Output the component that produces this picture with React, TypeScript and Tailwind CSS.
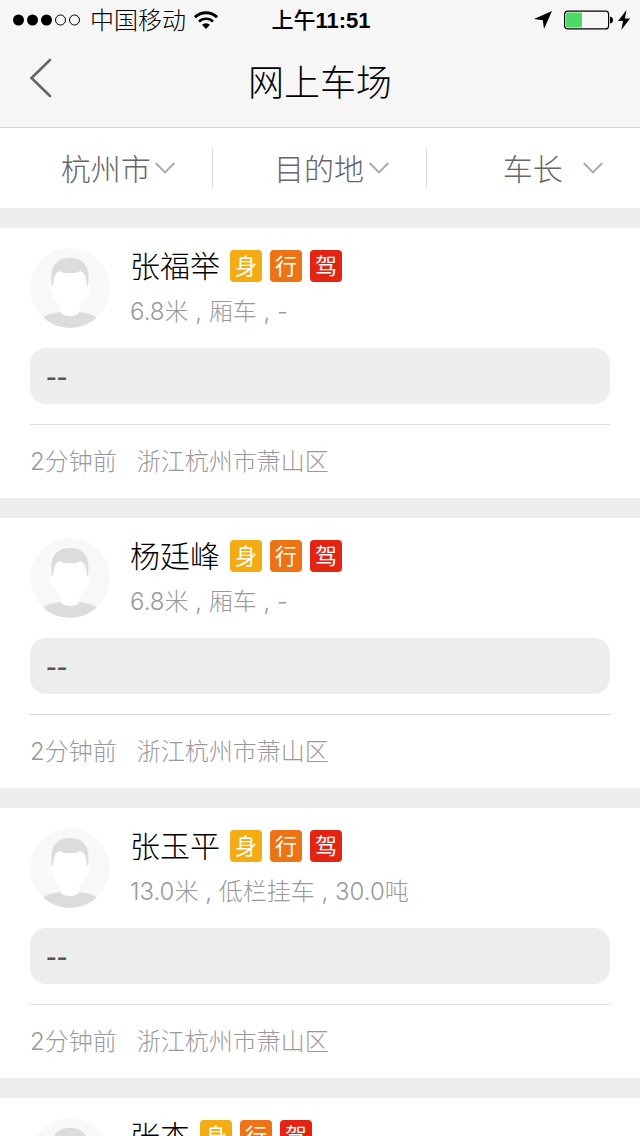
import React from 'react';

interface Driver {
  name: string;
  truck: string;
  route: string;
  time: string;
  place: string;
}

const drivers: Driver[] = [
  { name: '张福举', truck: '6.8米 , 厢车 , -', route: '--', time: '2分钟前', place: '浙江杭州市萧山区' },
  { name: '杨廷峰', truck: '6.8米 , 厢车 , -', route: '--', time: '2分钟前', place: '浙江杭州市萧山区' },
  { name: '张玉平', truck: '13.0米 , 低栏挂车 , 30.0吨', route: '--', time: '2分钟前', place: '浙江杭州市萧山区' },
  { name: '张杰', truck: '6.8米 , 厢车 , -', route: '--', time: '2分钟前', place: '浙江杭州市萧山区' },
];

const badges = [
  { text: '身', color: 'bg-[#f3ac14]' },
  { text: '行', color: 'bg-[#ec7416]' },
  { text: '驾', color: 'bg-[#e42412]' },
];

const filters = [
  { id: 'city', label: '出发地', value: '杭州市' },
  { id: 'dest', label: '目的地', value: '目的地' },
  { id: 'length', label: '车长', value: '车长' },
];

const StatusBar: React.FC = () => {
  return (
    <div className="h-10 pl-3 pr-[10px] grid grid-cols-[1fr_auto_1fr] items-center text-2xl text-black">
      <div className="flex items-center">
        <svg className="w-[70px] h-3" viewBox="0 0 70 12">
          <circle cx="6.5" cy="6" r="5.5" />
          <circle cx="20.5" cy="6" r="5.5" />
          <circle cx="34.5" cy="6" r="5.5" />
          <circle cx="48.5" cy="6" r="5" fill="none" stroke="#000" />
          <circle cx="62.5" cy="6" r="5" fill="none" stroke="#000" />
        </svg>
        <span className="ml-2 pt-0.5">中国移动</span>
        <svg className="w-6 h-[18px] ml-2" viewBox="0 0 24 18" fill="none" stroke="#000">
          <path d="M1 6.2a16 16 0 0 1 22 0" strokeWidth="3" />
          <path d="M5 10.6a10.2 10.2 0 0 1 14 0" strokeWidth="2.6" />
          <path d="M12 18l-4-4.2a5.8 5.8 0 0 1 8 0z" fill="#000" stroke="none" />
        </svg>
      </div>
      <div className="pt-0.5 text-[22px] font-medium">上午<span className="font-bold">11:51</span></div>
      <div className="flex items-center justify-end">
        <svg className="w-[18px] h-[18px]" viewBox="0 0 18 18">
          <path d="M18 0L10 18L8.8 9.2L0 8z" />
        </svg>
        <svg className="w-[50px] h-5 ml-3" viewBox="0 0 50 20">
          <rect x="0.6" y="1.1" width="44" height="17.8" rx="3" fill="none" stroke="#000" strokeWidth="1.2" />
          <rect x="2" y="2.5" width="16" height="15" rx="1" fill="#4cd964" />
          <path d="M46 6.5q3 .5 3 3.5t-3 3.5z" />
        </svg>
        <svg className="w-3 h-5 ml-1" viewBox="0 0 12 20">
          <path d="M8.5 0L0 11h5L3.4 20L12 8.6H6.8z" />
        </svg>
      </div>
    </div>
  );
};

const Avatar: React.FC = () => {
  return (
    <svg className="w-20 h-20 shrink-0 rounded-full" viewBox="0 0 80 80">
      <circle cx="40" cy="40" r="40" fill="#f8f8f8" />
      {/* Shoulders */}
      <path d="M13 70C18 65 26 65 31 64L49 64C54 65 62 65 67 70A40 40 0 0 1 13 70z" fill="#dcdcdc" />
      {/* Face and neck */}
      <path d="M22 22H58V37C62 38 60 46 57 47C55 53 51 56 49 59V65C46 69 34 69 31 65V59C29 56 25 53 23 47C20 46 18 38 22 37z" fill="#fff" />
      {/* Hair */}
      <path d="M22 38C19 18 27 10 40 10S61 18 58 38H57L56 31C55 26 53 24 50 23C46 26 43 25 40 25S34 26 30 23C27 24 25 26 24 31L23 38z" fill="#dcdcdc" />
    </svg>
  );
};

const DriverCard: React.FC<{ driver: Driver }> = ({ driver }) => {
  return (
    <li className="bg-white px-[30px] pt-5">
      <div className="flex gap-5">
        <Avatar />
        <div>
          <div className="flex items-center h-9">
            <h2 className="pt-0.5 text-[30px] leading-9 text-black mr-[10px]">{driver.name}</h2>
            <div className="flex gap-2">
              {badges.map((badge) => (
                <span
                  key={badge.text}
                  className={`w-8 h-8 pt-0.5 rounded flex items-center justify-center text-[22px] leading-8 font-normal text-white ${badge.color}`}
                >
                  {badge.text}
                </span>
              ))}
            </div>
          </div>
          <p className="mt-3 text-2xl text-[#999] font-['Inter','Noto_Sans_CJK_SC',sans-serif]">{driver.truck}</p>
        </div>
      </div>
      <p className="mt-5 h-14 px-4 rounded-2xl bg-[#eeedee] text-[32px] leading-14 text-[#555]">{driver.route}</p>
      <div className="mt-5 h-[74px] border-t border-[#dcdcdc] flex items-center gap-5 text-2xl text-[#999] font-['Inter','Noto_Sans_CJK_SC',sans-serif]">
        <span>{driver.time}</span>
        <span>{driver.place}</span>
      </div>
    </li>
  );
};

const App: React.FC = () => {
  return (
    <div
      lang="zh-CN"
      className="h-screen flex flex-col overflow-hidden bg-[#eeedee] font-light font-['Liberation_Sans','Noto_Sans_CJK_SC',sans-serif]"
    >
      <header className="shrink-0 bg-[#f6f6f6] border-b border-[#d5d5d5]">
        <StatusBar />
        <div className="h-[87px] px-7 grid grid-cols-[1fr_auto_1fr] items-center">
          <button type="button" aria-label="返回" className="w-6 h-10 mb-3">
            <svg className="w-6 h-10" viewBox="0 0 24 40" fill="none" stroke="#666" strokeWidth="2.6" strokeLinecap="round">
              <path d="M22 2L3.5 20L22 38" />
            </svg>
          </button>
          <h1 className="text-4xl text-black">网上车场</h1>
        </div>
      </header>

      {/* Filters */}
      <div className="shrink-0 h-20 bg-white grid grid-cols-3 items-center">
        {filters.map((filter) => (
          <label key={filter.id} className="h-10 flex items-center pl-14 pr-[37px] border-r border-[#dcdcdc] last:border-r-0">
            <select
              aria-label={filter.label}
              className="flex-1 min-w-0 h-10 pt-0.5 appearance-none bg-transparent text-[30px] leading-10 text-center [text-align-last:center] text-[#666] outline-none"
            >
              <option>{filter.value}</option>
            </select>
            <svg className="w-5 h-3 shrink-0" viewBox="0 0 20 12" fill="none" stroke="#aaa" strokeWidth="2">
              <path d="M0.7 1L10 10.4L19.3 1" />
            </svg>
          </label>
        ))}
      </div>

      <ul className="flex-1 min-h-0 mt-5 flex flex-col gap-5 overflow-y-auto [scrollbar-width:none]">
        {drivers.map((driver) => (
          <DriverCard key={driver.name} driver={driver} />
        ))}
      </ul>
    </div>
  );
};

export default App;
